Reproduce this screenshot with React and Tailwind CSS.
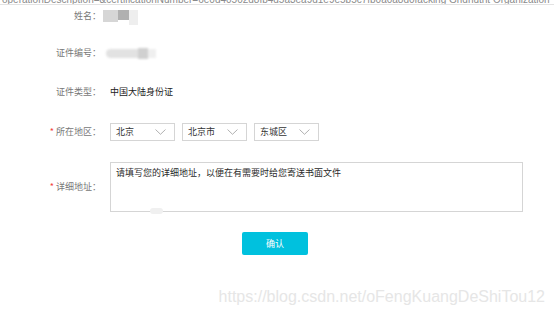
import React from "react";

const cjk = "font-['Microsoft_YaHei','Noto_Sans_CJK_SC',sans-serif]";

function Chevron() {
  return (
    <svg width="11" height="6" viewBox="0 0 11 6" className="shrink-0">
      <polyline points="0.5,0.5 5.5,5.3 10.5,0.5" fill="none" stroke="#a8a8a8" strokeWidth="0.9" />
    </svg>
  );
}

function Select({ value }) {
  return (
    <div className="w-[65px] h-[18px] border border-[#d5d5d5] flex items-center justify-between pl-[5px] pr-[8px] text-[9px] text-[#333]">
      <span>{value}</span>
      <Chevron />
    </div>
  );
}

function Row({ label, required, className, children }) {
  return (
    <div className={`flex items-center ${className}`}>
      <div className="w-[101px] text-right text-[9px] text-[#777] shrink-0">
        {required && <span className="text-[#f23d3d] mr-[2px]">*</span>}
        {label}：
      </div>
      {children}
    </div>
  );
}

export default function App() {
  return (
    <div className={`w-[554px] h-[316px] bg-white overflow-hidden ${cjk}`}>
      {/* cut-off address bar text at the very top */}
      <div className="h-[5px] overflow-hidden border-b border-[#e3e3e3]">
        <div className="-mt-[8px] pl-[2px] whitespace-nowrap text-[10px] text-[#8a8a8a] font-['Liberation_Sans',sans-serif]">
          operationDescription=&amp;certificationNumber=6e0d40502d8fb4d5a3ea9d1e9e5b5c7fb0a0a8d0facking Gridnutrit Organization
        </div>
      </div>

      <Row label="姓名" className="h-[16px] mt-[3px]">
        <div className="ml-[2px] flex items-start h-[16px] blur-[0.6px]">
          <div className="w-[15px] h-[12px] mt-[2px] bg-[#d6d6d6]" />
          <div className="w-[11px] h-[10px] mt-[2px] bg-[#b0b0b0]" />
          <div className="w-[9px] h-[15px] mt-[2px] bg-[#eeeeee]" />
        </div>
      </Row>

      <Row label="证件编号" className="h-[16px] mt-[21px]">
        <div className="ml-[5px] flex items-center blur-[0.8px]">
          <div className="w-[32px] h-[9px] rounded-l-full bg-[#e2e2e2]" />
          <div className="w-[10px] h-[11px] bg-[#d0d0d0]" />
          <div className="w-[8px] h-[9px] bg-[#efefef]" />
        </div>
      </Row>

      <Row label="证件类型" className="h-[16px] mt-[23px]">
        <div className="ml-[9px] text-[9px] text-[#222]">中国大陆身份证</div>
      </Row>

      <Row label="所在地区" required className="h-[18px] mt-[23px]">
        <div className="ml-[9px] flex gap-[7px]">
          <Select value="北京" />
          <Select value="北京市" />
          <Select value="东城区" />
        </div>
      </Row>

      <Row label="详细地址" required className="h-[50px] mt-[21px]">
        <div className="relative ml-[9px] w-[413px] h-[50px] border border-[#d5d5d5] px-[5px] pt-[3px] text-[9px] text-[#2a2a2a]">
          请填写您的详细地址，以便在有需要时给您寄送书面文件
          <div className="absolute left-[39px] -bottom-[3px] w-[13px] h-[6px] rounded-full bg-[#f0f0f0] blur-[0.5px]" />
        </div>
      </Row>

      <div className="flex mt-[20px] pl-[242px]">
        <button className="w-[66px] h-[23px] rounded-[2px] bg-[#00c1de] text-white text-[9px]">确认</button>
      </div>

      <div className="flex justify-end pr-[9px] mt-[33px]">
        <span className="text-[16px] leading-[18px] text-[#e6e6e6] font-['Liberation_Sans',sans-serif]">
          https://blog.csdn.net/oFengKuangDeShiTou12
        </span>
      </div>
    </div>
  );
}
